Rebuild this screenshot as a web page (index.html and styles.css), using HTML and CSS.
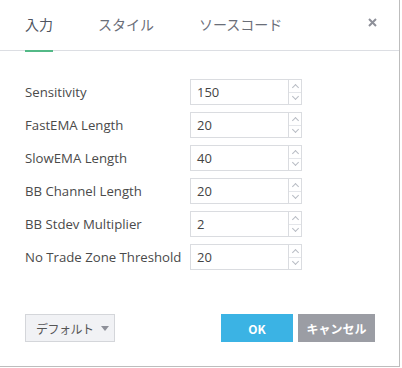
FILE: index.html
```html
<!DOCTYPE html>
<html lang="ja">
<head>
  <meta charset="UTF-8">
  <title>入力</title>
  <link rel="stylesheet" href="styles.css">
</head>
<body>
  <div class="dialog">
    <div class="tabs">
      <div class="tab active">入力</div>
      <div class="tab">スタイル</div>
      <div class="tab">ソースコード</div>
      <div class="close">
        <svg width="9" height="9" viewBox="0 0 9 9"><path d="M1 1L8 8M8 1L1 8" stroke="#8e9099" stroke-width="2"/></svg>
      </div>
    </div>
    <div class="content">
      <div class="row"><span class="label">Sensitivity</span><div class="spin"><span class="val">150</span><div class="arrows"><span class="up"></span><span class="down"></span></div></div></div>
      <div class="row"><span class="label">FastEMA Length</span><div class="spin"><span class="val">20</span><div class="arrows"><span class="up"></span><span class="down"></span></div></div></div>
      <div class="row"><span class="label">SlowEMA Length</span><div class="spin"><span class="val">40</span><div class="arrows"><span class="up"></span><span class="down"></span></div></div></div>
      <div class="row"><span class="label">BB Channel Length</span><div class="spin"><span class="val">20</span><div class="arrows"><span class="up"></span><span class="down"></span></div></div></div>
      <div class="row"><span class="label">BB Stdev Multiplier</span><div class="spin"><span class="val">2</span><div class="arrows"><span class="up"></span><span class="down"></span></div></div></div>
      <div class="row"><span class="label">No Trade Zone Threshold</span><div class="spin"><span class="val">20</span><div class="arrows"><span class="up"></span><span class="down"></span></div></div></div>
    </div>
    <div class="footer">
      <div class="defaults">デフォルト <span class="caret"></span></div>
      <div class="buttons">
        <div class="btn ok">OK</div>
        <div class="btn cancel">キャンセル</div>
      </div>
    </div>
  </div>
</body>
</html>
```

FILE: styles.css
```css
body {
  margin: 0;
  background: #fff;
  font-family: "Open Sans", "Noto Sans CJK JP", sans-serif;
  color: #4a4a4a;
}
.dialog {
  width: 400px;
  height: 367px;
  box-sizing: border-box;
  border-right: 1px solid #bdbdbd;
  border-bottom: 1px solid #bdbdbd;
  background: #fff;
  display: flex;
  flex-direction: column;
}
.tabs {
  display: flex;
  height: 50px;
  border-bottom: 1px solid #dcdee3;
  padding-left: 25px;
  position: relative;
}
.tab {
  font-family: "Noto Sans CJK JP", sans-serif;
  font-size: 14px;
  color: #6a6e78;
  padding-top: 14px;
  margin-right: 45px;
  box-sizing: border-box;
  height: 50px;
}
.tab.active {
  color: #4f5561;
  border-bottom: 2px solid #53b987;
  height: 52px;
}
.close {
  position: absolute;
  right: 22px;
  top: 18px;
  display: flex;
}
.content {
  padding: 28px 0 0 25px;
  display: flex;
  flex-direction: column;
  gap: 7px;
}
.row {
  display: flex;
  align-items: center;
  height: 26px;
}
.label {
  width: 165px;
  font-size: 13.2px;
}
.spin {
  display: flex;
  width: 112px;
  height: 26px;
  box-sizing: border-box;
  border: 1px solid #dadce0;
}
.val {
  flex: 1;
  font-size: 13px;
  padding-left: 6px;
  line-height: 24px;
  color: #444;
}
.arrows {
  width: 12px;
  border-left: 1px solid #dadce0;
  display: flex;
  flex-direction: column;
}
.arrows span {
  flex: 1;
  display: flex;
  align-items: center;
  justify-content: center;
}
.arrows .up {
  border-bottom: 1px solid #e4e6ea;
}
.arrows span::before {
  content: "";
  width: 4px;
  height: 4px;
  border-left: 1px solid #b8bcc4;
  border-top: 1px solid #b8bcc4;
}
.arrows .up::before {
  transform: rotate(45deg);
  margin-top: 3px;
}
.arrows .down::before {
  transform: rotate(225deg);
  margin-top: -3px;
}
.footer {
  margin-top: auto;
  display: flex;
  justify-content: space-between;
  padding: 0 24px 24px 25px;
}
.defaults {
  width: 90px;
  height: 28px;
  box-sizing: border-box;
  border: 1px solid #d4d6da;
  background: #f1f2f5;
  font-family: "Noto Sans CJK JP", sans-serif;
  font-size: 12px;
  letter-spacing: -0.5px;
  white-space: nowrap;
  color: #555;
  display: flex;
  align-items: center;
  padding-left: 10px;
  gap: 7px;
}
.caret {
  width: 0;
  height: 0;
  border-left: 4px solid transparent;
  border-right: 4px solid transparent;
  border-top: 5px solid #8e9099;
}
.buttons {
  display: flex;
  gap: 5px;
}
.btn {
  height: 28px;
  display: flex;
  align-items: center;
  justify-content: center;
  color: #fff;
  font-weight: bold;
  font-size: 12px;
  font-family: "Noto Sans CJK JP", sans-serif;
}
.ok {
  width: 72px;
  background: #3bb3e4;
}
.cancel {
  width: 77px;
  background: #9b9da4;
}
```
